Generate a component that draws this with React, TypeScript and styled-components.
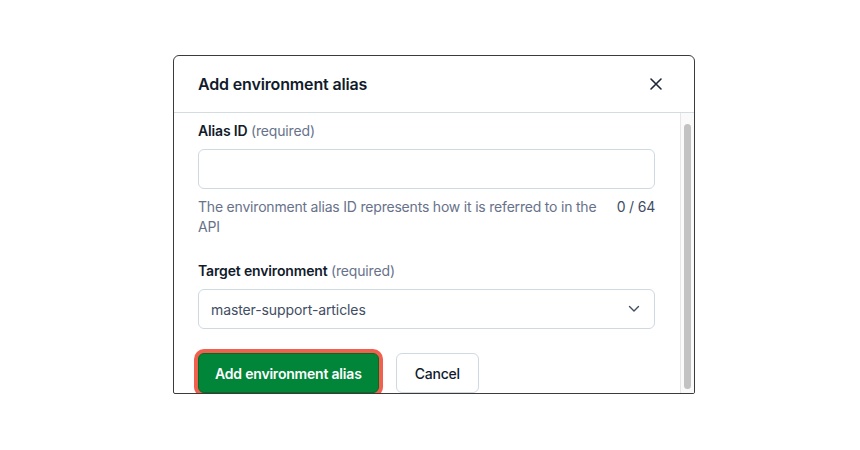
import React, { FC, useLayoutEffect, useRef } from "react";
import styled, { createGlobalStyle } from "styled-components";

const GlobalStyle = createGlobalStyle`
  html, body {
    margin: 0;
    padding: 0;
    background: #ffffff;
    font-family: Inter, "Noto Sans", "Liberation Sans", sans-serif;
  }
`;

const Page = styled.div`
  width: 860px;
  height: 450px;
  display: flex;
  padding: 55px 0 0 173px;
  box-sizing: border-box;
`;

const Modal = styled.div`
  width: 522px;
  height: 339px;
  box-sizing: border-box;
  border: 1px solid #3b3b3b;
  border-radius: 6px 6px 2px 2px;
  background: #ffffff;
  display: flex;
  flex-direction: column;
  overflow: hidden;
`;

const Header = styled.div`
  height: 57px;
  flex-shrink: 0;
  box-sizing: border-box;
  display: flex;
  align-items: center;
  justify-content: space-between;
  padding: 0 22px 0 24px;
  border-bottom: 1px solid #d3dce0;
`;

const Title = styled.h2`
  margin: 0;
  font-size: 16px;
  font-weight: 600;
  color: #111b2b;
  letter-spacing: -0.15px;
`;

const CloseButton = styled.button`
  width: 32px;
  height: 32px;
  border: none;
  background: transparent;
  display: flex;
  align-items: center;
  justify-content: center;
  padding: 0;
  cursor: pointer;
`;

const BodyWrap = styled.div`
  flex: 1;
  min-height: 0;
  display: flex;
`;

const Body = styled.div`
  flex: 1;
  overflow: hidden;
  padding: 24px 25px 24px 24px;
  box-sizing: border-box;
`;

const ScrollTrack = styled.div`
  width: 14px;
  flex-shrink: 0;
  box-sizing: border-box;
  background: #fafafa;
  border-left: 1px solid #e6e6e6;
  padding: 11px 3px 4px 3px;
  display: flex;
`;

const ScrollThumb = styled.div`
  flex: 1;
  background: #c2c2c2;
  border-radius: 4px;
`;

const Field = styled.div`
  display: flex;
  flex-direction: column;
  margin-bottom: 24px;
`;

const Label = styled.label`
  font-size: 14px;
  line-height: 20px;
  font-weight: 600;
  color: #111b2b;
  margin-bottom: 8px;
  letter-spacing: -0.15px;
`;

const Hint = styled.span`
  font-weight: 400;
  color: #67728a;
`;

const TextInput = styled.input`
  height: 40px;
  box-sizing: border-box;
  border: 1px solid #cfd9e0;
  border-radius: 6px;
  padding: 0 12px;
  font-family: inherit;
  font-size: 14px;
  outline: none;
`;

const HelpRow = styled.div`
  display: flex;
  justify-content: space-between;
  gap: 14px;
  margin-top: 8px;
  font-size: 14px;
  line-height: 20px;
  color: #67728a;
  letter-spacing: -0.2px;
`;

const Counter = styled.span`
  white-space: nowrap;
  color: #414d63;
`;

const SelectBox = styled.div`
  height: 40px;
  box-sizing: border-box;
  border: 1px solid #cfd9e0;
  border-radius: 6px;
  padding: 0 14px 0 12px;
  display: flex;
  align-items: center;
  justify-content: space-between;
  font-size: 14px;
  color: #414d63;
  letter-spacing: -0.1px;
`;

const Actions = styled.div`
  display: flex;
  gap: 17px;
`;

const Button = styled.button<{ $primary?: boolean }>`
  height: 40px;
  box-sizing: border-box;
  border-radius: 6px;
  padding: 0 ${(p) => (p.$primary ? "16px" : "18px")};
  font-family: inherit;
  font-size: 14px;
  letter-spacing: -0.2px;
  font-weight: ${(p) => (p.$primary ? 600 : 500)};
  background: ${(p) => (p.$primary ? "#008539" : "#ffffff")};
  color: ${(p) => (p.$primary ? "#ffffff" : "#111b2b")};
  border: 1px solid ${(p) => (p.$primary ? "#006d23" : "#cfd9e0")};
  box-shadow: ${(p) => (p.$primary ? "0 0 0 4px #f1604f" : "none")};
  cursor: pointer;
`;

const App: FC = () => {
  const bodyRef = useRef<HTMLDivElement>(null);

  useLayoutEffect(() => {
    if (bodyRef.current) bodyRef.current.scrollTop = 16;
  }, []);

  return (
    <>
      <GlobalStyle />
      <Page>
        <Modal>
          <Header>
            <Title>Add environment alias</Title>
            <CloseButton aria-label="Close">
              <svg width="14" height="14" viewBox="0 0 14 14">
                <path d="M2 2L12 12M12 2L2 12" stroke="#1b273a" strokeWidth="1.6" strokeLinecap="round" />
              </svg>
            </CloseButton>
          </Header>
          <BodyWrap>
            <Body ref={bodyRef}>
              <Field>
                <Label>
                  Alias ID <Hint>(required)</Hint>
                </Label>
                <TextInput />
                <HelpRow>
                  <span>The environment alias ID represents how it is referred to in the API</span>
                  <Counter>0 / 64</Counter>
                </HelpRow>
              </Field>
              <Field>
                <Label>
                  Target environment <Hint>(required)</Hint>
                </Label>
                <SelectBox>
                  <span>master-support-articles</span>
                  <svg width="12" height="8" viewBox="0 0 12 8">
                    <path d="M1.5 1.5L6 6L10.5 1.5" fill="none" stroke="#414d63" strokeWidth="1.4" strokeLinecap="round" strokeLinejoin="round" />
                  </svg>
                </SelectBox>
              </Field>
              <Actions>
                <Button $primary>Add environment alias</Button>
                <Button>Cancel</Button>
              </Actions>
            </Body>
            <ScrollTrack>
              <ScrollThumb />
            </ScrollTrack>
          </BodyWrap>
        </Modal>
      </Page>
    </>
  );
};

export default App;
